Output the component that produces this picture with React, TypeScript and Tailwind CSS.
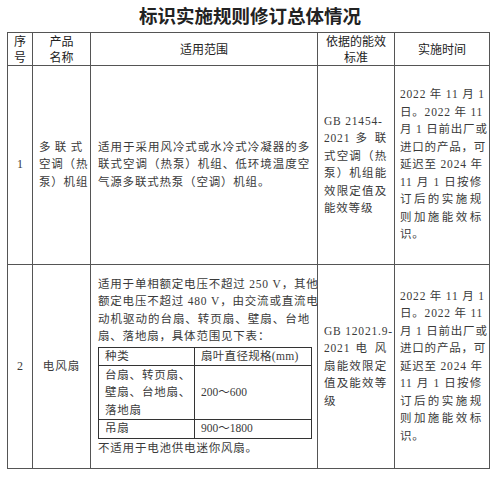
import type { ReactNode } from 'react';

const sans = "font-['Noto_Sans_CJK_SC','Noto_Sans',sans-serif]";
const serif = "font-['Liberation_Serif','Noto_Sans_CJK_SC',serif]";

// one printed line; full lines are spread edge to edge like the source document
const L = ({ children, j = false }: { children: ReactNode; j?: boolean }) => (
  <div className={j ? 'text-justify [text-align-last:justify] whitespace-nowrap' : 'whitespace-nowrap'}>{children}</div>
);

const th = `border border-[#555] ${sans} font-normal text-[12px] leading-[16px] tracking-normal text-[#222] text-center align-middle p-0`;
const td = `border border-[#555] align-middle p-0`;

export default function App() {
  return (
    <div className="w-[500px] h-[483px] bg-white">
      <div className={`h-[32px] flex items-center justify-center pb-[1px] ${sans} text-[18.5px] font-bold text-[#222]`}>
        标识实施规则修订总体情况
      </div>

      <table className={`ml-[7px] w-[482px] table-fixed border-collapse border-[1.5px] border-[#6a6a6a] ${serif} text-[11.5px] leading-[17.5px] tracking-[0.8px] text-[#3a3a3a]`}>
        <colgroup>
          <col className="w-[25px]" />
          <col className="w-[58px]" />
          <col className="w-[227px]" />
          <col className="w-[77px]" />
          <col className="w-[95px]" />
        </colgroup>
        <thead>
          <tr className="h-[32px]">
            <th className={th}>序<br />号</th>
            <th className={th}>产品<br />名称</th>
            <th className={th}>适用范围</th>
            <th className={th}>依据的能效<br />标准</th>
            <th className={th}>实施时间</th>
          </tr>
        </thead>
        <tbody>
          <tr className="h-[199px]">
            <td className={`${td} text-center text-[12px] tracking-normal`}>1</td>
            <td className={`${td} pl-[6px] pr-[7px]`}>
              <L j>多联式</L>
              <L j>空调（热</L>
              <L j>泵）机组</L>
            </td>
            <td className={`${td} px-[7px]`}>
              <L j>适用于采用风冷式或水冷式冷凝器的多</L>
              <L j>联式空调（热泵）机组、低环境温度空</L>
              <L>气源多联式热泵（空调）机组。</L>
            </td>
            <td className={`${td} pl-[6px] pr-[7px]`}>
              <L>GB 21454-</L>
              <L j>2021 多 联</L>
              <L j>式空调（热</L>
              <L j>泵）机组能</L>
              <L j>效限定值及</L>
              <L>能效等级</L>
            </td>
            <td className={`${td} pl-[5px] pr-[7px]`}>
              <L j>2022 年 11 月 1</L>
              <L j>日。2022 年 11</L>
              <L j>月 1 日前出厂或</L>
              <L j>进口的产品，可</L>
              <L j>延迟至 2024 年</L>
              <L j>11 月 1 日按修</L>
              <L j>订后的实施规</L>
              <L j>则加施能效标</L>
              <L>识。</L>
            </td>
          </tr>
          <tr className="h-[204px]">
            <td className={`${td} text-center text-[12px] tracking-normal`}>2</td>
            <td className={`${td} text-center tracking-[1px]`}>电风扇</td>
            <td className={`${td} px-[7px]`}>
              <L j>适用于单相额定电压不超过 250 V，其他</L>
              <L j>额定电压不超过 480 V，由交流或直流电</L>
              <L j>动机驱动的台扇、转页扇、壁扇、台地</L>
              <L>扇、落地扇，具体范围见下表：</L>
              <table className="w-[213px] table-fixed border-collapse my-[1px]">
                <colgroup>
                  <col className="w-[96px]" />
                  <col className="w-[117px]" />
                </colgroup>
                <tbody>
                  <tr className="h-[18px]">
                    <td className="border border-[#333] px-[6px] align-middle">种类</td>
                    <td className="border border-[#333] px-[6px] align-middle tracking-[0.3px]">扇叶直径规格(mm)</td>
                  </tr>
                  <tr className="h-[54px]">
                    <td className="border border-[#333] px-[6px] align-middle">
                      <L>台扇、转页扇、</L>
                      <L>壁扇、台地扇、</L>
                      <L>落地扇</L>
                    </td>
                    <td className="border border-[#333] px-[6px] align-middle tracking-normal">200～600</td>
                  </tr>
                  <tr className="h-[18px]">
                    <td className="border border-[#333] px-[6px] align-middle">吊扇</td>
                    <td className="border border-[#333] px-[6px] align-middle tracking-normal">900～1800</td>
                  </tr>
                </tbody>
              </table>
              <L>不适用于电池供电迷你风扇。</L>
            </td>
            <td className={`${td} pl-[6px] pr-[7px]`}>
              <L>GB 12021.9-</L>
              <L j>2021 电 风</L>
              <L j>扇能效限定</L>
              <L j>值及能效等</L>
              <L>级</L>
            </td>
            <td className={`${td} pl-[5px] pr-[7px]`}>
              <L j>2022 年 11 月 1</L>
              <L j>日。2022 年 11</L>
              <L j>月 1 日前出厂或</L>
              <L j>进口的产品，可</L>
              <L j>延迟至 2024 年</L>
              <L j>11 月 1 日按修</L>
              <L j>订后的实施规</L>
              <L j>则加施能效标</L>
              <L>识。</L>
            </td>
          </tr>
        </tbody>
      </table>
    </div>
  );
}
